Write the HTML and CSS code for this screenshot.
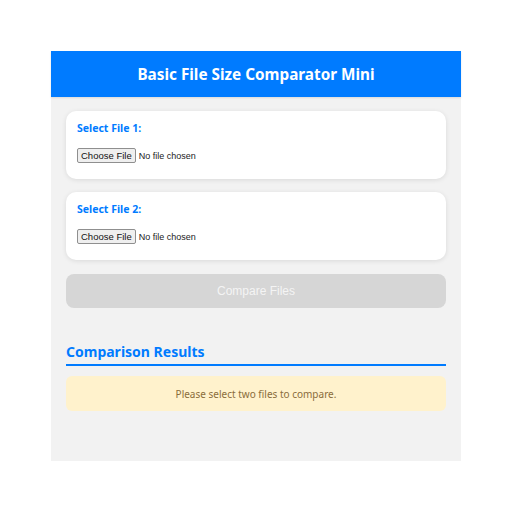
FILE: index.html
```html
<!DOCTYPE html>
<html>
<head>
<meta charset="utf-8">
<link rel="stylesheet" href="styles.css">
</head>
<body>
<div class="app">
  <header class="app-header">
    <h1>Basic File Size Comparator Mini</h1>
  </header>
  <main class="app-body">
    <section class="card">
      <label class="card-label" for="f1">Select File 1:</label>
      <input class="file-input" type="file" id="f1">
    </section>
    <section class="card">
      <label class="card-label" for="f2">Select File 2:</label>
      <input class="file-input" type="file" id="f2">
    </section>
    <button class="compare-btn" disabled>Compare Files</button>
    <h2 class="results-title">Comparison Results</h2>
    <div class="notice">Please select two files to compare.</div>
  </main>
</div>
</body>
</html>
```
FILE: styles.css
```css
html, body {
  margin: 0;
  padding: 0;
  background: #ffffff;
}
body {
  font-family: "Noto Sans", "Open Sans", sans-serif;
}
.app {
  width: 410px;
  height: 410px;
  margin: 51px auto 0;
  background: #f2f2f2;
  display: flex;
  flex-direction: column;
}
.app-header {
  flex-shrink: 0;
  background: #007bff;
  height: 46px;
  display: flex;
  align-items: center;
  justify-content: center;
  box-shadow: 0 1px 2px rgba(0,0,0,0.1);
}
.app-header h1 {
  margin: 0;
  color: #fff;
  font-size: 15.3px;
  font-weight: 700;
}
.app-body {
  padding: 14px 15px 0;
  display: flex;
  flex-direction: column;
}
.card {
  flex-shrink: 0;
  box-sizing: border-box;
  height: 68px;
  background: #fff;
  border-radius: 10px;
  box-shadow: 0 1px 5px rgba(0,0,0,0.1);
  padding: 11px 11px 0;
  display: flex;
  flex-direction: column;
  align-items: flex-start;
  gap: 13px;
  margin-bottom: 13px;
}
.card-label {
  color: #007bff;
  font-weight: 700;
  font-size: 10.5px;
  line-height: 13px;
}
.file-input {
  font-family: "Liberation Sans", Arial, sans-serif;
  font-size: 9px;
  color: #222;
}
.file-input::file-selector-button {
  font-family: "Liberation Sans", Arial, sans-serif;
  font-size: 9.5px;
  padding: 1px 3px;
  margin-right: 3px;
  border: 1px solid #8f8f8f;
  border-radius: 2px;
  background: #efefef;
  color: #111;
}
.compare-btn {
  flex-shrink: 0;
  margin-top: 1px;
  height: 34px;
  border: none;
  border-radius: 8px;
  background: #d6d6d6;
  color: #f4f4f4;
  font-family: "Liberation Sans", Arial, sans-serif;
  font-size: 12px;
}
.results-title {
  flex-shrink: 0;
  margin: 35px 0 0;
  padding-bottom: 3px;
  border-bottom: 2px solid #007bff;
  color: #007bff;
  font-size: 14px;
  font-weight: 700;
  line-height: 18px;
}
.notice {
  flex-shrink: 0;
  margin-top: 10px;
  height: 35px;
  display: flex;
  align-items: center;
  justify-content: center;
  background: #fff2cc;
  border-radius: 6px;
  color: #8a6d3b;
  font-size: 10px;
}
```
